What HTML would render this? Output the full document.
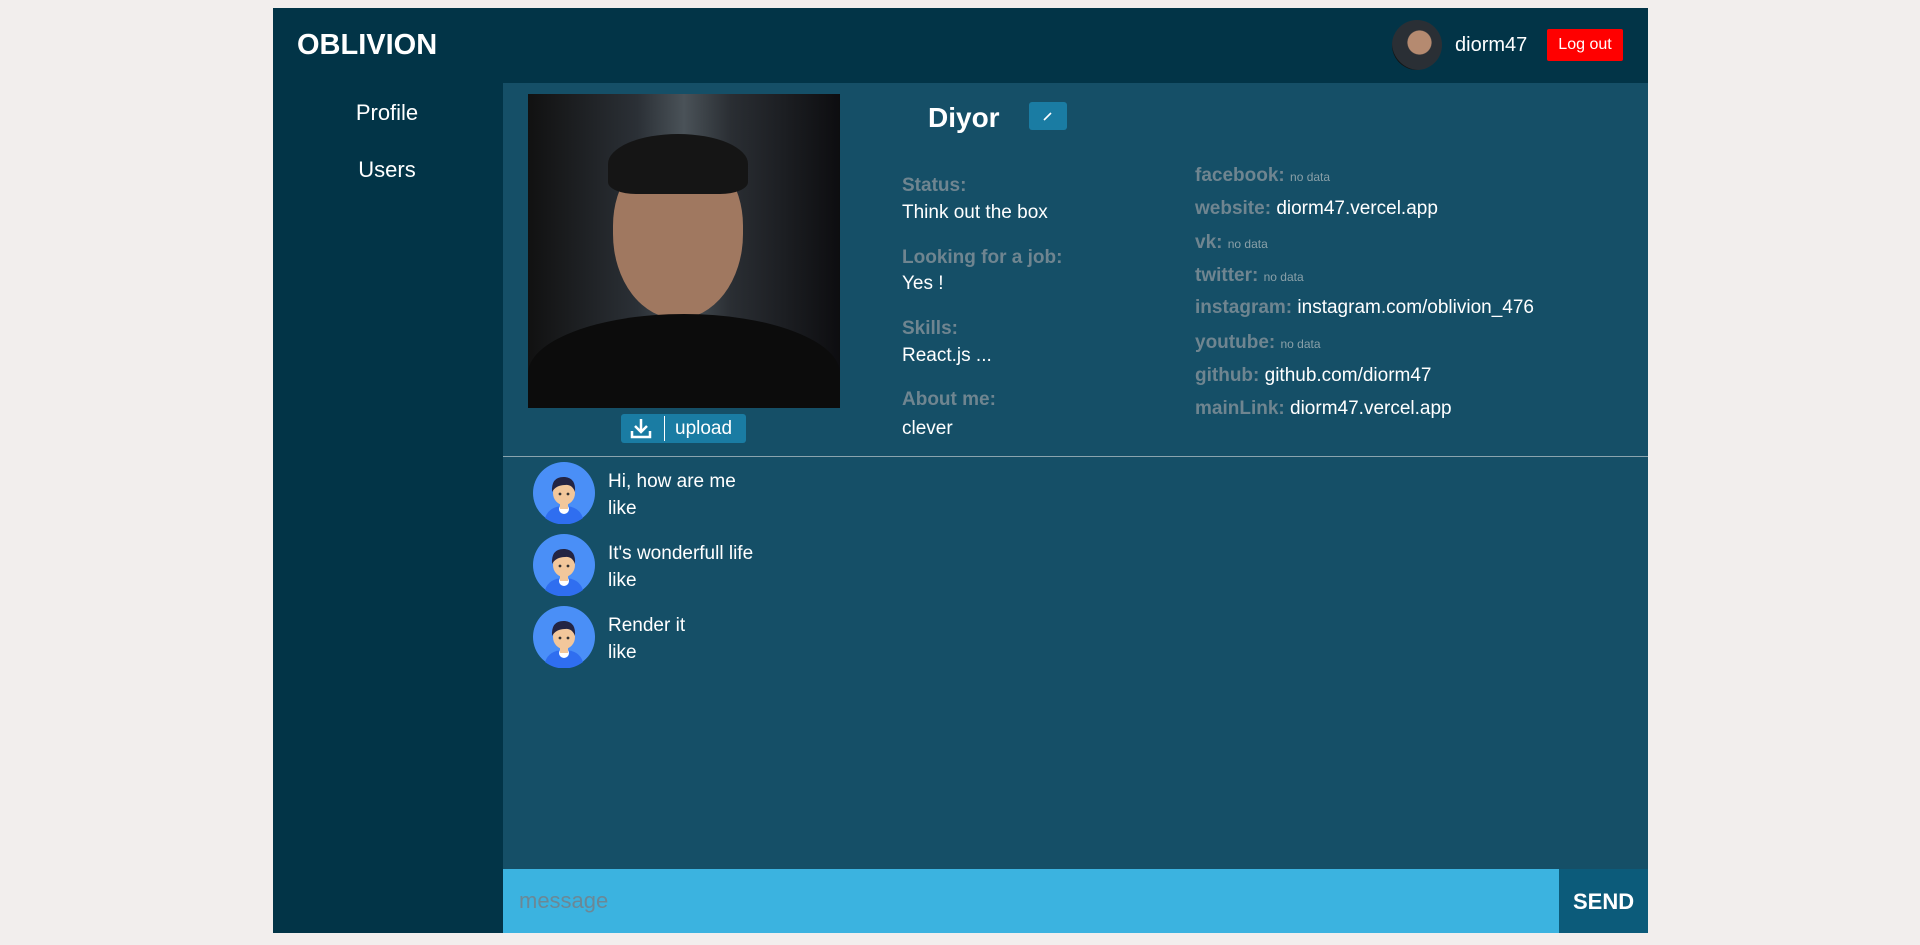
<!DOCTYPE html>
<html><head><meta charset="utf-8"><style>
*{margin:0;padding:0;box-sizing:border-box}
body{width:1920px;height:945px;background:#f2eeed;font-family:"Liberation Sans",sans-serif;position:relative;overflow:hidden}
.a{position:absolute;white-space:nowrap}
.hdr{left:273px;top:8px;width:1375px;height:75px;background:#023447}
.side{left:273px;top:83px;width:230px;height:850px;background:#023447}
.main{left:503px;top:83px;width:1145px;height:850px;background:#154f67}
.w{color:#fff}
.lbl{color:#6f8590;font-weight:bold;font-size:19px}
.val{color:#fff;font-size:19px}
.nd{color:#8aa0a8;font-size:12px;font-weight:normal}
</style></head><body>
<div class="a hdr"></div>
<div class="a side"></div>
<div class="a main"></div>
<div class="a w" style="left:297px;top:29px;font-size:29px;font-weight:bold">OBLIVION</div>
<div class="a" style="left:1392px;top:20px;width:50px;height:50px;border-radius:50%;background:radial-gradient(circle at 55% 45%,#b58a70 0 30%,#2a2f35 32% 70%,#111 72%)"></div>
<div class="a w" style="left:1455px;top:34px;font-size:20px">diorm47</div>
<div class="a w" style="left:1547px;top:29px;width:76px;height:32px;background:#ff0000;border-radius:2px;font-size:16px;line-height:32px;text-align:center">Log out</div>
<div class="a w" style="left:303px;top:100px;width:168px;text-align:center;font-size:22px">Profile</div>
<div class="a w" style="left:303px;top:157px;width:168px;text-align:center;font-size:22px">Users</div>
<div class="a" style="left:528px;top:94px;width:312px;height:314px;background:linear-gradient(90deg,#111 0%,#2b3036 35%,#4a5258 50%,#2a2e33 65%,#0d0d10 100%);overflow:hidden">
<div class="a" style="left:85px;top:55px;width:130px;height:170px;border-radius:45% 45% 50% 50%;background:#a07860"></div>
<div class="a" style="left:80px;top:40px;width:140px;height:60px;border-radius:50% 50% 20% 20%;background:#151515"></div>
<div class="a" style="left:0;top:220px;width:312px;height:120px;border-radius:50% 50% 0 0;background:#0c0c0c"></div>
</div>
<div class="a" style="left:621px;top:414px;width:125px;height:29px;background:#1a7ca3;border-radius:3px"></div>
<svg class="a" style="left:628px;top:416px" width="26" height="25" viewBox="0 0 26 25"><path d="M13 3v13M7 10l6 6 6-6M4 15v6h18v-6" stroke="#fff" stroke-width="2.5" fill="none"/></svg>
<div class="a" style="left:664px;top:416px;width:1px;height:25px;background:#fff"></div>
<div class="a w" style="left:675px;top:418px;font-size:19px">upload</div>
<div class="a w" style="left:928px;top:102px;font-size:28px;font-weight:bold">Diyor</div>
<div class="a" style="left:1029px;top:102px;width:38px;height:28px;background:#1a7ca3;border-radius:3px"></div>
<svg class="a" style="left:1040px;top:108px" width="16" height="16"><path d="M4 12l7-7" stroke="#fff" stroke-width="1.6"/></svg>
<div class="a lbl" style="left:902px;top:175px">Status:</div>
<div class="a val" style="left:902px;top:202px">Think out the box</div>
<div class="a lbl" style="left:902px;top:247px">Looking for a job:</div>
<div class="a val" style="left:902px;top:273px">Yes !</div>
<div class="a lbl" style="left:902px;top:318px">Skills:</div>
<div class="a val" style="left:902px;top:345px">React.js ...</div>
<div class="a lbl" style="left:902px;top:389px">About me:</div>
<div class="a val" style="left:902px;top:418px">clever</div>
<div class="a lbl" style="left:1195px;top:165px">facebook: <span class="nd">no data</span></div>
<div class="a lbl" style="left:1195px;top:198px">website: <span class="val" style="font-weight:normal">diorm47.vercel.app</span></div>
<div class="a lbl" style="left:1195px;top:232px">vk: <span class="nd">no data</span></div>
<div class="a lbl" style="left:1195px;top:265px">twitter: <span class="nd">no data</span></div>
<div class="a lbl" style="left:1195px;top:297px">instagram: <span class="val" style="font-weight:normal">instagram.com/oblivion_476</span></div>
<div class="a lbl" style="left:1195px;top:332px">youtube: <span class="nd">no data</span></div>
<div class="a lbl" style="left:1195px;top:365px">github: <span class="val" style="font-weight:normal">github.com/diorm47</span></div>
<div class="a lbl" style="left:1195px;top:398px">mainLink: <span class="val" style="font-weight:normal">diorm47.vercel.app</span></div>
<div class="a" style="left:503px;top:456px;width:1145px;height:1px;background:#8aa4ae"></div>

<div class="a" style="left:533px;top:462px">
<div style="position:relative;height:72px"><svg width="62" height="62" viewBox="0 0 62 62"><circle cx="31" cy="31" r="31" fill="#4a8ff7"/><path d="M12 56q4-12 19-12t19 12a31 31 0 0 1-38 0z" fill="#2f6ef0"/><circle cx="31" cy="47" r="5" fill="#fff"/><rect x="27" y="38" width="8" height="9" fill="#f2c79b"/><ellipse cx="31" cy="31" rx="11" ry="12" fill="#f2c79b"/><path d="M19 30q-1-16 13-15q11 1 10 15q-3-8-10-7q-9 0-13 7z" fill="#232443"/><circle cx="27" cy="32" r="1.4" fill="#333"/><circle cx="35" cy="32" r="1.4" fill="#333"/></svg>
<div class="a w" style="left:75px;top:6px;font-size:19px;line-height:27px">Hi, how are me<br>like</div></div>
<div style="position:relative;height:72px"><svg width="62" height="62" viewBox="0 0 62 62"><circle cx="31" cy="31" r="31" fill="#4a8ff7"/><path d="M12 56q4-12 19-12t19 12a31 31 0 0 1-38 0z" fill="#2f6ef0"/><circle cx="31" cy="47" r="5" fill="#fff"/><rect x="27" y="38" width="8" height="9" fill="#f2c79b"/><ellipse cx="31" cy="31" rx="11" ry="12" fill="#f2c79b"/><path d="M19 30q-1-16 13-15q11 1 10 15q-3-8-10-7q-9 0-13 7z" fill="#232443"/><circle cx="27" cy="32" r="1.4" fill="#333"/><circle cx="35" cy="32" r="1.4" fill="#333"/></svg>
<div class="a w" style="left:75px;top:6px;font-size:19px;line-height:27px">It's wonderfull life<br>like</div></div>
<div style="position:relative;height:72px"><svg width="62" height="62" viewBox="0 0 62 62"><circle cx="31" cy="31" r="31" fill="#4a8ff7"/><path d="M12 56q4-12 19-12t19 12a31 31 0 0 1-38 0z" fill="#2f6ef0"/><circle cx="31" cy="47" r="5" fill="#fff"/><rect x="27" y="38" width="8" height="9" fill="#f2c79b"/><ellipse cx="31" cy="31" rx="11" ry="12" fill="#f2c79b"/><path d="M19 30q-1-16 13-15q11 1 10 15q-3-8-10-7q-9 0-13 7z" fill="#232443"/><circle cx="27" cy="32" r="1.4" fill="#333"/><circle cx="35" cy="32" r="1.4" fill="#333"/></svg>
<div class="a w" style="left:75px;top:6px;font-size:19px;line-height:27px">Render it<br>like</div></div>
</div>

<div class="a" style="left:503px;top:869px;width:1056px;height:64px;background:#3bb3e0"></div>
<div class="a" style="left:519px;top:888px;font-size:22px;color:#6b8896">message</div>
<div class="a" style="left:1559px;top:869px;width:89px;height:64px;background:#0c5b7a"></div>
<div class="a w" style="left:1573px;top:889px;font-size:22px;font-weight:bold">SEND</div>
</body></html>
